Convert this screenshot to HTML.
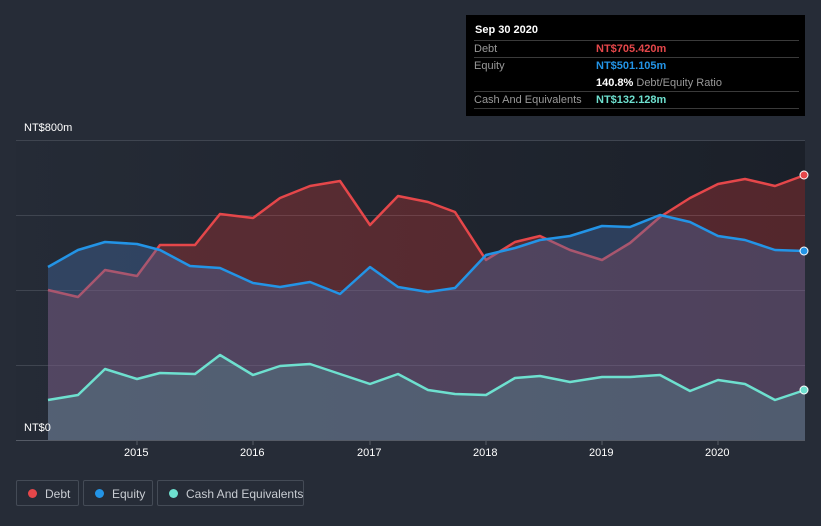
<!DOCTYPE html>
<html><head><meta charset="utf-8"><style>
body{margin:0;width:821px;height:526px;background:#262c37;font-family:"Liberation Sans",sans-serif;overflow:hidden;position:relative}
.t{position:absolute;color:#fff;font-size:11px}
.tip{position:absolute;left:466px;top:15px;width:339px;height:101px;background:#000;font-size:11px}
.tip .r{position:absolute;left:8px;right:6px;border-top:1px solid #3a3a3a;color:#999}
.leg{position:absolute;top:480px;height:26px;border:1px solid #444b56;border-radius:2px;color:#c8ccd2;font-size:12px;line-height:26px;box-sizing:border-box;white-space:nowrap}
.leg i{position:absolute;left:11px;top:8px;width:9px;height:9px;border-radius:50%}
</style></head><body>
<svg width="821" height="526" style="position:absolute;left:0;top:0">
<defs><linearGradient id="bg" x1="0" y1="0" x2="1" y2="0"><stop offset="0" stop-color="#252b36"/><stop offset="1" stop-color="#1b2029"/></linearGradient></defs>
<rect x="16" y="140" width="789" height="300" fill="url(#bg)"/>
<g stroke="#3f4550" stroke-width="1"><line x1="16" y1="140.5" x2="805" y2="140.5"/><line x1="16" y1="215.5" x2="805" y2="215.5"/><line x1="16" y1="290.5" x2="805" y2="290.5"/><line x1="16" y1="365.5" x2="805" y2="365.5"/></g>
<polygon fill="rgba(229,57,53,0.28)" points="48,290 78,297 105,270 137,276 160,245 195,245 220,214 253,218 280,198 310,186 340,181 370,225 398,196 428,202 455,212 486,260 515,242 540,236 570,250 602,260 630,243 660,217 690,198 718,184 745,179 775,186 805,175 805,440 48,440"/>
<polyline fill="none" stroke="#e5474a" stroke-width="2.5" stroke-linejoin="round" points="48,290 78,297 105,270 137,276 160,245 195,245 220,214 253,218 280,198 310,186 340,181 370,225 398,196 428,202 455,212 486,260 515,242 540,236 570,250 602,260 630,243 660,217 690,198 718,184 745,179 775,186 805,175"/>
<polygon fill="rgba(70,110,170,0.38)" points="48,267 78,250 105,242 137,244 160,250 190,266 220,268 253,283 280,287 310,282 340,294 370,267 398,287 428,292 455,288 486,255 515,248 540,240 570,236 602,226 630,227 660,215 690,222 718,236 745,240 775,250 805,251 805,440 48,440"/>
<polyline fill="none" stroke="#2394e6" stroke-width="2.5" stroke-linejoin="round" points="48,267 78,250 105,242 137,244 160,250 190,266 220,268 253,283 280,287 310,282 340,294 370,267 398,287 428,292 455,288 486,255 515,248 540,240 570,236 602,226 630,227 660,215 690,222 718,236 745,240 775,250 805,251"/>
<polygon fill="rgba(90,200,190,0.2)" points="48,400 78,395 105,369 137,379 160,373 195,374 220,355 253,375 280,366 310,364 340,374 370,384 398,374 428,390 455,394 486,395 515,378 540,376 570,382 602,377 630,377 660,375 690,391 718,380 745,384 775,400 805,390 805,440 48,440"/>
<polyline fill="none" stroke="#6ee0cf" stroke-width="2.5" stroke-linejoin="round" points="48,400 78,395 105,369 137,379 160,373 195,374 220,355 253,375 280,366 310,364 340,374 370,384 398,374 428,390 455,394 486,395 515,378 540,376 570,382 602,377 630,377 660,375 690,391 718,380 745,384 775,400 805,390"/>
<line x1="16" y1="440.5" x2="805" y2="440.5" stroke="#555b66"/>
<g stroke="#555b66"><line x1="137" y1="440" x2="137" y2="445"/><line x1="253" y1="440" x2="253" y2="445"/><line x1="370" y1="440" x2="370" y2="445"/><line x1="486" y1="440" x2="486" y2="445"/><line x1="602" y1="440" x2="602" y2="445"/><line x1="718" y1="440" x2="718" y2="445"/></g>
<circle cx="804" cy="175" r="4" fill="#e5474a" stroke="#fff" stroke-width="1"/>
<circle cx="804" cy="251" r="4" fill="#2394e6" stroke="#fff" stroke-width="1"/>
<circle cx="804" cy="390" r="4" fill="#6ee0cf" stroke="#fff" stroke-width="1"/>
</svg>
<div class="t" style="left:24px;top:122px">NT$800m</div>
<div class="t" style="left:24px;top:422px">NT$0</div>
<div class="t" style="left:124px;top:447px">2015</div>
<div class="t" style="left:240px;top:447px">2016</div>
<div class="t" style="left:357px;top:447px">2017</div>
<div class="t" style="left:473px;top:447px">2018</div>
<div class="t" style="left:589px;top:447px">2019</div>
<div class="t" style="left:705px;top:447px">2020</div>
<div class="tip">
<div style="position:absolute;left:9px;top:9px;color:#fff;font-weight:bold">Sep 30 2020</div>
<div class="r" style="top:25px;height:17px;line-height:17px">Debt<span style="position:absolute;left:122px;color:#e5474a;font-weight:bold">NT$705.420m</span></div>
<div class="r" style="top:42px;height:34px;line-height:17px">Equity<span style="position:absolute;left:122px;color:#2394e6;font-weight:bold">NT$501.105m</span><br><span style="position:absolute;left:122px;top:17px"><b style="color:#fff">140.8%</b> Debt/Equity Ratio</span></div>
<div class="r" style="top:76px;height:16px;line-height:16px;border-bottom:1px solid #3a3a3a">Cash And Equivalents<span style="position:absolute;left:122px;color:#6ee0cf;font-weight:bold">NT$132.128m</span></div>
</div>
<div class="leg" style="left:16px;width:63px"><i style="background:#e5474a"></i><span style="position:absolute;left:28px">Debt</span></div>
<div class="leg" style="left:83px;width:70px"><i style="background:#2394e6"></i><span style="position:absolute;left:28px">Equity</span></div>
<div class="leg" style="left:157px;width:147px"><i style="background:#6ee0cf"></i><span style="position:absolute;left:28px">Cash And Equivalents</span></div>
</body></html>
